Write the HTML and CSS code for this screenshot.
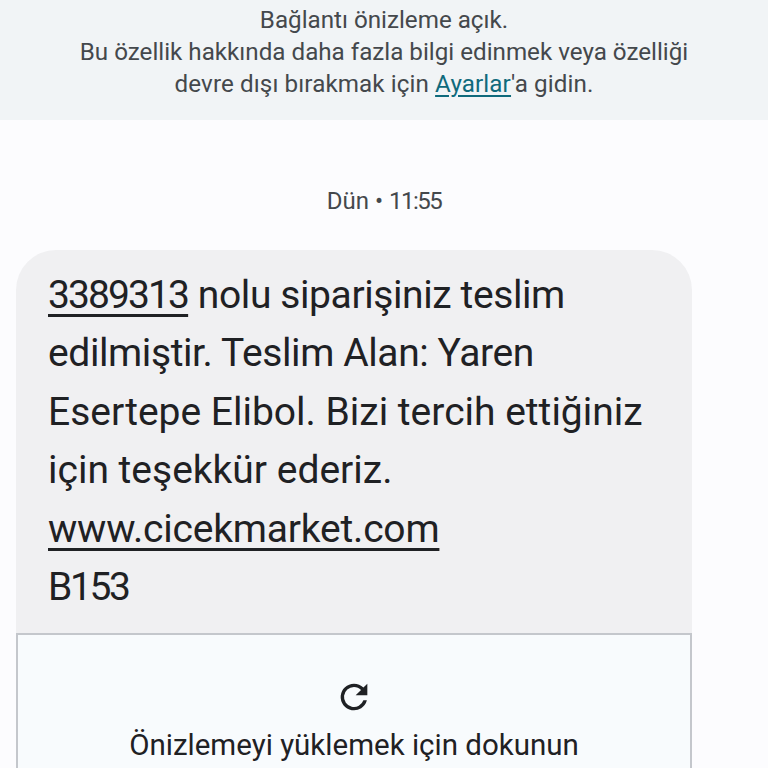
FILE: index.html
```html
<!DOCTYPE html>
<html lang="tr">
<head>
<meta charset="utf-8">
<title>Mesaj</title>
<link rel="stylesheet" href="styles.css">
</head>
<body>
<div class="page">
  <header class="banner">
    <p class="banner-text">Bağlantı önizleme açık.<br>Bu özellik hakkında daha fazla bilgi edinmek veya özelliği<br><span class="banner-wide">devre dışı bırakmak için <a class="banner-link">Ayarlar</a>'a gidin.</span></p>
  </header>
  <div class="stamp">Dün • <span class="digits">11:55</span></div>
  <article class="bubble">
    <p class="message"><a class="msg-link digits-lg">3389313</a> <span class="tight">nolu siparişiniz teslim</span><br><span class="tight">edilmiştir. Teslim Alan: Yaren</span><br>Esertepe Elibol. Bizi tercih ettiğiniz<br>için teşekkür ederiz.<br><a class="msg-link url">www.cicekmarket.com</a><br><span class="digits-xl">B153</span></p>
    <div class="preview">
      <svg class="reload" viewBox="0 0 24 24" width="40" height="40"><path d="M17.65 6.35A7.96 7.96 0 0 0 12 4a8 8 0 1 0 7.73 10h-2.08A6 6 0 1 1 12 6c1.66 0 3.14.69 4.22 1.78L13 11h7V4l-2.35 2.35z"/></svg>
      <div class="preview-label">Önizlemeyi yüklemek için dokunun</div>
    </div>
  </article>
</div>
</body>
</html>
```
FILE: styles.css
```css
html, body {
  margin: 0;
  padding: 0;
  height: 100%;
  overflow: hidden;
  background: #fcfcfe;
}
.page {
  height: 768px;
  overflow: hidden;
  font-family: Roboto, "Noto Sans", sans-serif;
  display: flex;
  flex-direction: column;
}
.banner {
  height: 120px;
  flex: none;
  background: #f1f4f6;
  box-sizing: border-box;
  padding-top: 4px;
}
.banner-text {
  margin: 0;
  text-align: center;
  font-size: 24.2px;
  line-height: 32px;
  color: #44484c;
}
.banner-wide {
  letter-spacing: 0.1px;
}
.banner-link {
  color: #0f6a7c;
  text-decoration: underline;
  text-underline-offset: 3px;
}
.stamp {
  margin-top: 66px;
  height: 30px;
  line-height: 30px;
  text-align: center;
  font-size: 24px;
  color: #44484c;
}
.digits {
  letter-spacing: -1.5px;
}
.bubble {
  margin: 34px 0 0 16px;
  width: 676px;
  flex: none;
  background: #f0f0f2;
  border-radius: 40px 40px 0 0;
}
.message {
  margin: 0;
  padding: 16px 30px 17px 32px;
  font-size: 39px;
  line-height: 58.4px;
  color: #1f2124;
}
.digits-lg {
  letter-spacing: -1.9px;
}
.digits-xl {
  letter-spacing: -2.4px;
}
.tight {
  letter-spacing: -0.4px;
}
.msg-link {
  color: inherit;
  text-decoration: underline;
  text-decoration-thickness: 3px;
  text-underline-offset: 6px;
}
.url {
  letter-spacing: -0.2px;
}
.preview {
  border: 2px solid #c4c7cc;
  border-bottom: 0;
  background: #f8fbfd;
  height: 200px;
  box-sizing: border-box;
  display: flex;
  flex-direction: column;
  align-items: center;
  padding-top: 42px;
}
.reload {
  fill: #1f2124;
  flex: none;
}
.preview-label {
  margin-top: 10px;
  font-size: 29.5px;
  line-height: 36px;
  color: #1f2124;
}
```
